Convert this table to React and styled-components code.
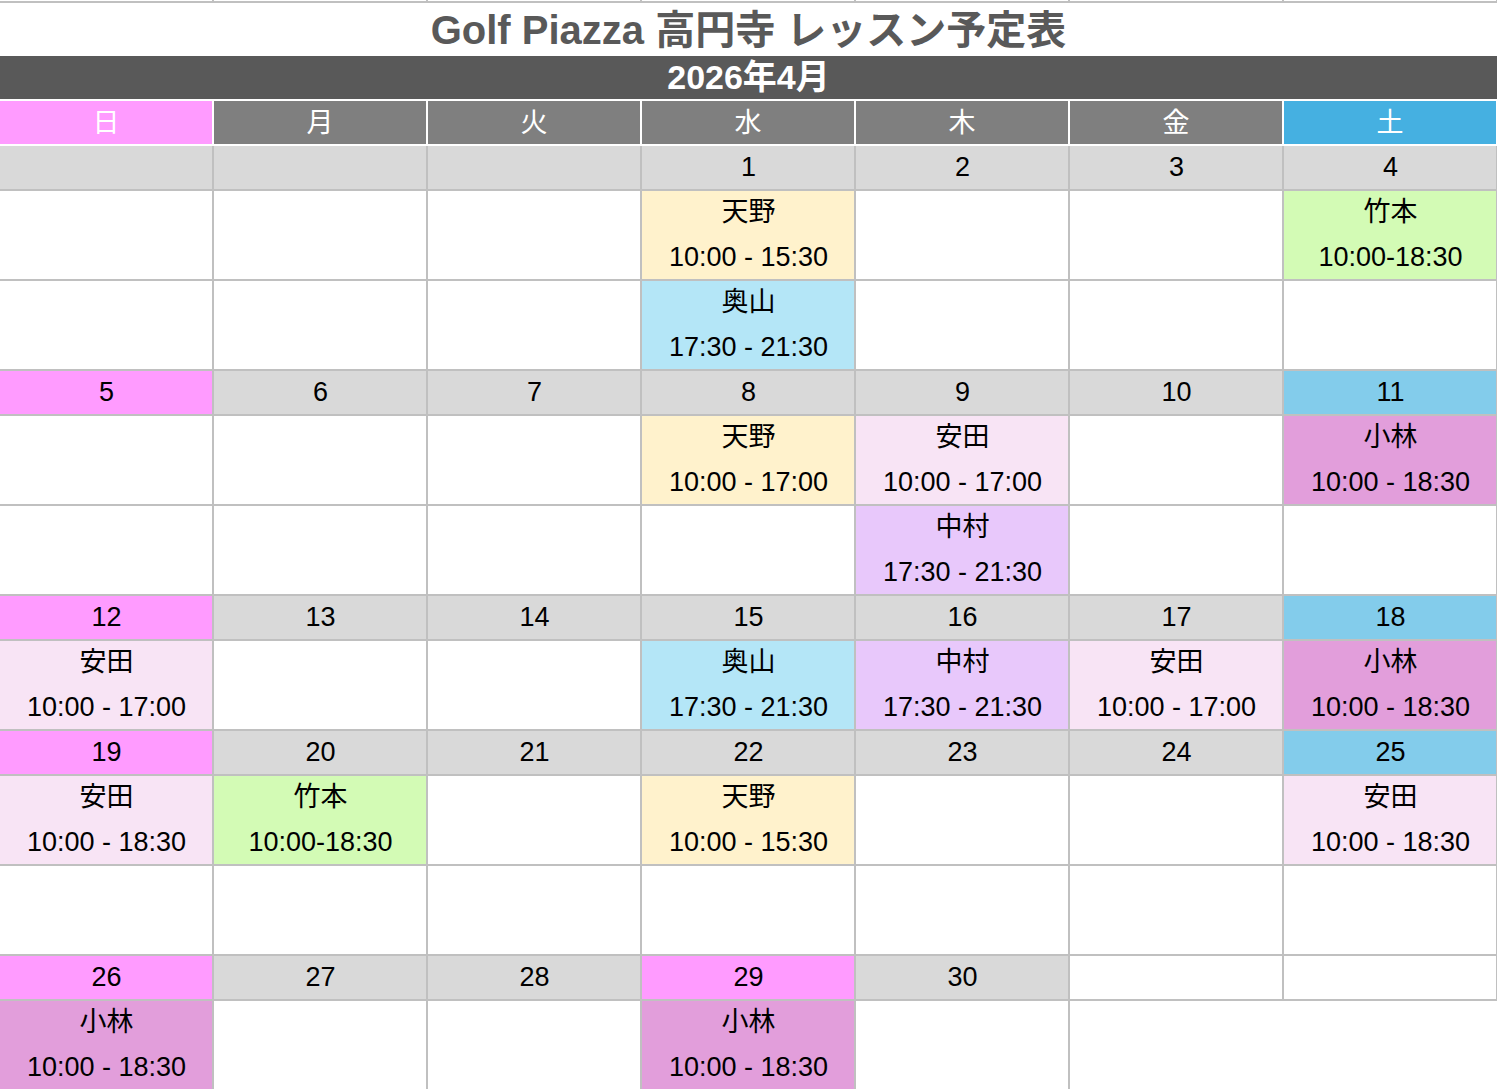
import React from "react";
import styled, { createGlobalStyle } from "styled-components";

const GlobalStyle = createGlobalStyle`
  html, body {
    margin: 0;
    padding: 0;
    width: 1497px;
    height: 1089px;
    overflow: hidden;
    background: #ffffff;
  }
  body {
    font-family: "Liberation Sans", "Noto Sans CJK JP", sans-serif;
  }
`;

const LINE = "#c0c0c0";

const COLORS = {
  sun: "#ff9bff",
  sat: "#45b0e1",
  satDate: "#83cceb",
  weekday: "#7f7f7f",
  date: "#d9d9d9",
  amano: "#fff2cc",
  okuyama: "#b4e6f7",
  takemoto: "#d3fbb5",
  yasuda: "#f8e4f5",
  nakamura: "#e8c8fb",
  kobayashi: "#e29edb",
};

const DAY_NAMES = [
  { label: "日", bg: COLORS.sun },
  { label: "月", bg: COLORS.weekday },
  { label: "火", bg: COLORS.weekday },
  { label: "水", bg: COLORS.weekday },
  { label: "木", bg: COLORS.weekday },
  { label: "金", bg: COLORS.weekday },
  { label: "土", bg: COLORS.sat },
];

const s = (name, time, bg) => ({ name, time, bg });

const WEEKS = [
  {
    dates: [null, null, null, 1, 2, 3, 4],
    tones: ["gray", "gray", "gray", "gray", "gray", "gray", "gray"],
    rows: [
      [null, null, null, s("天野", "10:00 - 15:30", COLORS.amano), null, null, s("竹本", "10:00-18:30", COLORS.takemoto)],
      [null, null, null, s("奥山", "17:30 - 21:30", COLORS.okuyama), null, null, null],
    ],
  },
  {
    dates: [5, 6, 7, 8, 9, 10, 11],
    tones: ["sun", "gray", "gray", "gray", "gray", "gray", "sat"],
    rows: [
      [null, null, null, s("天野", "10:00 - 17:00", COLORS.amano), s("安田", "10:00 - 17:00", COLORS.yasuda), null, s("小林", "10:00 - 18:30", COLORS.kobayashi)],
      [null, null, null, null, s("中村", "17:30 - 21:30", COLORS.nakamura), null, null],
    ],
  },
  {
    dates: [12, 13, 14, 15, 16, 17, 18],
    tones: ["sun", "gray", "gray", "gray", "gray", "gray", "sat"],
    rows: [
      [
        s("安田", "10:00 - 17:00", COLORS.yasuda),
        null,
        null,
        s("奥山", "17:30 - 21:30", COLORS.okuyama),
        s("中村", "17:30 - 21:30", COLORS.nakamura),
        s("安田", "10:00 - 17:00", COLORS.yasuda),
        s("小林", "10:00 - 18:30", COLORS.kobayashi),
      ],
    ],
  },
  {
    dates: [19, 20, 21, 22, 23, 24, 25],
    tones: ["sun", "gray", "gray", "gray", "gray", "gray", "sat"],
    rows: [
      [
        s("安田", "10:00 - 18:30", COLORS.yasuda),
        s("竹本", "10:00-18:30", COLORS.takemoto),
        null,
        s("天野", "10:00 - 15:30", COLORS.amano),
        null,
        null,
        s("安田", "10:00 - 18:30", COLORS.yasuda),
      ],
      [null, null, null, null, null, null, null],
    ],
  },
  {
    dates: [26, 27, 28, 29, 30, null, null],
    tones: ["sun", "gray", "gray", "sun", "gray", "white", "white"],
    rows: [
      [
        s("小林", "10:00 - 18:30", COLORS.kobayashi),
        null,
        null,
        s("小林", "10:00 - 18:30", COLORS.kobayashi),
        null,
        "blank",
        "blank",
      ],
    ],
  },
];

const toneBg = (tone) => {
  if (tone === "sun") return COLORS.sun;
  if (tone === "sat") return COLORS.satDate;
  if (tone === "white") return "#ffffff";
  return COLORS.date;
};

const Page = styled.div`
  width: 1497px;
  display: flex;
  flex-direction: column;
`;

const Row = styled.div`
  display: grid;
  grid-template-columns: repeat(7, 214px);
`;

const TopStub = styled.div`
  height: 1px;
  border-right: 2px solid ${LINE};
  border-bottom: 2px solid ${LINE};
`;

const Title = styled.h1`
  margin: 0;
  box-sizing: border-box;
  height: 53px;
  padding-bottom: 6px;
  display: flex;
  align-items: center;
  justify-content: center;
  font-size: 40px;
  font-weight: 700;
  color: #595959;
  font-family: "Liberation Sans", "Noto Sans CJK JP", sans-serif;
`;

const MonthBar = styled.div`
  box-sizing: content-box;
  height: 37px;
  padding-bottom: 6px;
  background: #595959;
  border-bottom: 2px solid #ffffff;
  display: flex;
  align-items: center;
  justify-content: center;
  color: #ffffff;
  font-size: 34px;
  font-weight: 700;
`;

const DayName = styled.div`
  box-sizing: border-box;
  height: 45px;
  padding-bottom: 4px;
  background: ${(p) => p.$bg};
  border-right: 2px solid #ffffff;
  border-bottom: 2px solid #ffffff;
  display: flex;
  align-items: center;
  justify-content: center;
  color: #ffffff;
  font-size: 27px;
`;

const DateCell = styled.div`
  box-sizing: border-box;
  height: 45px;
  background: ${(p) => p.$bg};
  border-right: 2px solid ${LINE};
  border-bottom: 2px solid ${LINE};
  display: flex;
  align-items: center;
  justify-content: center;
  padding-left: 1px;
  color: #000000;
  font-size: 27px;
`;

const SlotCell = styled.div`
  box-sizing: border-box;
  height: 90px;
  background: ${(p) => p.$bg || "#ffffff"};
  border-right: ${(p) => (p.$blank ? "none" : `2px solid ${LINE}`)};
  border-bottom: ${(p) => (p.$blank ? "none" : `2px solid ${LINE}`)};
  display: grid;
  grid-template-rows: 44px 44px;
  color: #000000;
  font-size: 27px;
`;

const SlotLine = styled.div`
  display: flex;
  align-items: center;
  justify-content: center;
  padding-left: 1px;
  padding-top: ${(p) => (p.$name ? "0" : "1px")};
  padding-bottom: ${(p) => (p.$name ? "7px" : "0")};
`;

const Week = ({ week }) => (
  <>
    <Row>
      {week.dates.map((d, i) => (
        <DateCell key={i} $bg={toneBg(week.tones[i])}>
          {d}
        </DateCell>
      ))}
    </Row>
    {week.rows.map((row, r) => (
      <Row key={r}>
        {row.map((slot, i) =>
          slot === "blank" ? (
            <SlotCell key={i} $blank />
          ) : (
            <SlotCell key={i} $bg={slot && slot.bg}>
              {slot && (
                <>
                  <SlotLine $name>{slot.name}</SlotLine>
                  <SlotLine>{slot.time}</SlotLine>
                </>
              )}
            </SlotCell>
          )
        )}
      </Row>
    ))}
  </>
);

const App = () => {
  return (
    <Page>
      <GlobalStyle />
      <Row>
        {DAY_NAMES.map((d) => (
          <TopStub key={d.label} />
        ))}
      </Row>
      <Title>Golf Piazza 高円寺 レッスン予定表</Title>
      <MonthBar>2026年4月</MonthBar>
      <Row>
        {DAY_NAMES.map((d) => (
          <DayName key={d.label} $bg={d.bg}>
            {d.label}
          </DayName>
        ))}
      </Row>
      {WEEKS.map((w, i) => (
        <Week key={i} week={w} />
      ))}
    </Page>
  );
};

export default App;
